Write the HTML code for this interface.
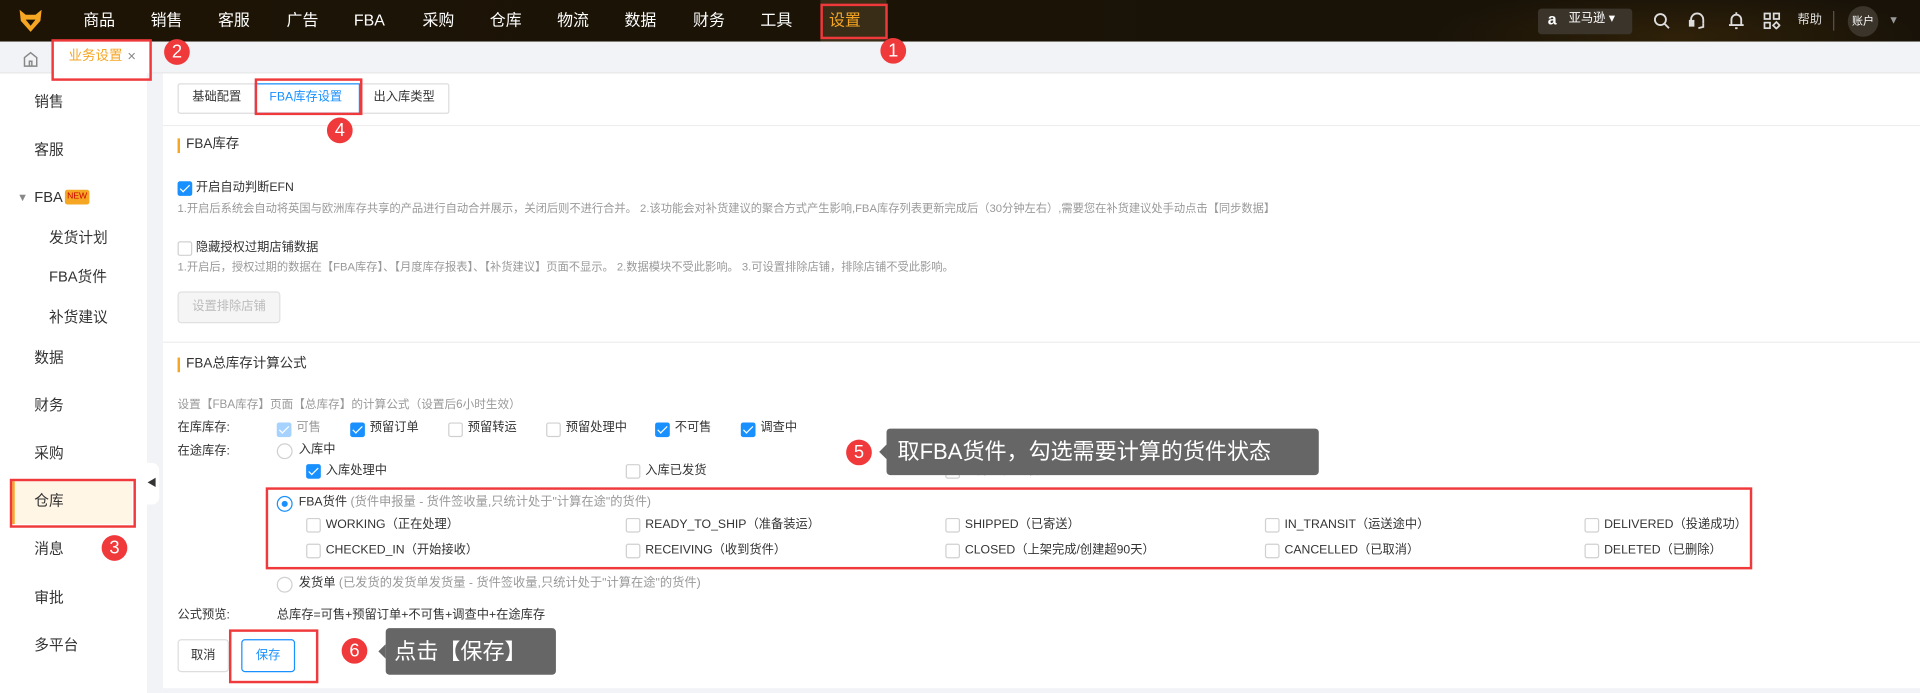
<!DOCTYPE html>
<html><head><meta charset="utf-8"><style>
*{box-sizing:border-box;margin:0;padding:0}
html,body{width:1920px;height:693px;overflow:hidden;background:#fff}
body{font-family:"Liberation Sans","Noto Sans CJK SC",sans-serif;color:#333;line-height:1.25}
#w{position:absolute;left:0;top:0;width:1568px;height:566px;transform:scale(1.22449);transform-origin:0 0;font-size:11px}
.a{position:absolute;white-space:nowrap}
.hdr{left:0;top:0;width:1568px;height:34px;background:radial-gradient(ellipse 200px 40px at 1370px 30px,#2f2109,transparent),linear-gradient(90deg,#1e1405 0%,#1a1306 40%,#181208 100%)}
.nav{top:9px;color:#fff;font-size:13px}
.rb{position:absolute;border:2px solid #f0393b;z-index:5}
.c{position:absolute;width:21px;height:21px;border-radius:50%;background:#f0393b;color:#fff;font-size:15px;text-align:center;line-height:21px;z-index:6}
.cb{position:absolute;width:12px;height:12px;border:1px solid #d0d0d0;border-radius:2px;background:#fff}
.cb.on{background:#1890ff;border-color:#1890ff}
.cb.on:after{content:"";position:absolute;left:3px;top:0px;width:3px;height:7px;border:solid #fff;border-width:0 1.5px 1.5px 0;transform:rotate(45deg)}
.rd{position:absolute;width:13px;height:13px;border:1px solid #d0d0d0;border-radius:50%;background:#fff}
.rd.on{border-color:#1890ff}
.rd.on:after{content:"";position:absolute;left:3px;top:3px;width:5px;height:5px;border-radius:50%;background:#1890ff}
.g{color:#999}
.side{left:28px;font-size:12px;color:#333}
.tip{position:absolute;background:#666;color:#fff;border-radius:3px;z-index:6}
.tip:before{content:"";position:absolute;left:-6px;top:50%;margin-top:-6px;border:6px solid transparent;border-left:0;border-right-color:#666}
</style></head><body><div id="w">
<div class="a hdr"></div>
<svg class="a" style="left:15px;top:7px" width="20" height="20" viewBox="0 0 20 20"><path d="M1 1 L6 5 L14 5 L19 1 L18 10 L10 19 L2 10Z" fill="#f5a623"/><path d="M6 9 L10 14 L14 9Z" fill="#1a1306"/></svg>
<div class="a" style="left:670px;top:0;width:54px;height:34px;background:#3a2d18"></div>
<div class="a nav" style="left:68px">商品</div><div class="a nav" style="left:123px">销售</div><div class="a nav" style="left:178px">客服</div><div class="a nav" style="left:234px">广告</div><div class="a nav" style="left:289px">FBA</div><div class="a nav" style="left:345px">采购</div><div class="a nav" style="left:400px">仓库</div><div class="a nav" style="left:455px">物流</div><div class="a nav" style="left:510px">数据</div><div class="a nav" style="left:566px">财务</div><div class="a nav" style="left:621px">工具</div><div class="a nav" style="left:677px;color:#f5a623">设置</div>
<div class="rb" style="left:670px;top:3px;width:55px;height:29px"></div>
<div class="c" style="left:719px;top:31px">1</div>
<div class="a" style="left:1256px;top:7px;width:77px;height:21px;background:#3b342b;border-radius:3px"></div>
<div class="a" style="left:1264px;top:8px;color:#fff;font-size:13px;font-weight:bold">a</div>
<div class="a" style="left:1281px;top:10px;color:#fff;font-size:10px">亚马逊 ▾</div>
<svg class="a" style="left:1350px;top:10px" width="14" height="14" viewBox="0 0 14 14" fill="none" stroke="#ddd" stroke-width="1.5"><circle cx="6" cy="6" r="4.5"/><path d="M9.5 9.5L13 13"/></svg>
<svg class="a" style="left:1379px;top:9px" width="14" height="16" viewBox="0 0 14 16" fill="none" stroke="#ddd" stroke-width="1.5"><path d="M2 9V7a5 5 0 0 1 10 0v3"/><rect x="1" y="8" width="3" height="4" fill="#ddd"/><path d="M12 10v3l-4 1"/></svg>
<svg class="a" style="left:1411px;top:9px" width="14" height="16" viewBox="0 0 14 16" fill="none" stroke="#ddd" stroke-width="1.5"><path d="M3 11V7a4 4 0 0 1 8 0v4M1 11.5h12M6 14h2M7 1v2"/></svg>
<svg class="a" style="left:1440px;top:10px" width="14" height="14" viewBox="0 0 14 14" fill="none" stroke="#ddd" stroke-width="1.4"><rect x="1" y="1" width="4.5" height="4.5"/><rect x="8.5" y="1" width="4.5" height="4.5"/><rect x="1" y="8.5" width="4.5" height="4.5"/><path d="M10.7 8l2.7 2.7-2.7 2.7-2.7-2.7z"/></svg>
<div class="a" style="left:1468px;top:11px;color:#ddd;font-size:10px">帮助</div>
<div class="a" style="left:1497px;top:9px;width:1px;height:16px;background:#555"></div>
<div class="a" style="left:1509px;top:5px;width:25px;height:25px;border-radius:50%;background:#3b342b;color:#fff;font-size:9px;text-align:center;line-height:25px">账户</div>
<div class="a" style="left:1542px;top:11px;color:#999;font-size:9px">▼</div>

<div class="a" style="left:0;top:34px;width:1568px;height:26px;background:#f2f3f6;border-bottom:1px solid #e8e8e8"></div>
<svg class="a" style="left:18px;top:41px" width="14" height="14" viewBox="0 0 14 14" fill="none" stroke="#888" stroke-width="1.2"><path d="M2 6L7 2l5 4v7H2z"/><path d="M6 13V9h2v4"/></svg>
<div class="a" style="left:43px;top:34px;width:79px;height:26px;background:#fff"></div>
<div class="a" style="left:56px;top:40px;color:#f5a623;font-size:11px">业务设置</div>
<div class="a" style="left:104px;top:39px;color:#888;font-size:12px">×</div>
<div class="rb" style="left:42px;top:32px;width:82px;height:34px"></div>
<div class="c" style="left:134px;top:32px">2</div>

<div class="a" style="left:120px;top:60px;width:13px;height:506px;background:#f2f3f6"></div>
<div class="a side" style="top:76px">销售</div>
<div class="a side" style="top:115px">客服</div>
<div class="a" style="left:14px;top:156px;color:#888;font-size:9px">▼</div>
<div class="a side" style="top:154px">FBA</div>
<div class="a" style="left:53px;top:155px;width:20px;height:12px;background:#f5a623;color:#c00;font-size:7px;text-align:center;line-height:12px;border-radius:2px">NEW</div>
<div class="a side" style="left:40px;top:187px">发货计划</div>
<div class="a side" style="left:40px;top:219px">FBA货件</div>
<div class="a side" style="left:40px;top:252px">补货建议</div>
<div class="a side" style="top:285px">数据</div>
<div class="a side" style="top:324px">财务</div>
<div class="a side" style="top:363px">采购</div>
<div class="a" style="left:10px;top:393px;width:98px;height:35px;background:#fff6e6;border-left:2px solid #f5a623"></div>
<div class="a side" style="top:402px">仓库</div>
<div class="rb" style="left:8px;top:391px;width:103px;height:40px"></div>
<div class="c" style="left:83px;top:437px">3</div>
<div class="a side" style="top:441px">消息</div>
<div class="a side" style="top:481px">审批</div>
<div class="a side" style="top:520px">多平台</div>
<div class="a" style="left:118px;top:378px;width:12px;height:34px;background:#fff;border-radius:0 6px 6px 0;color:#333;font-size:8px;line-height:34px;text-align:center">◀</div>

<div class="a" style="left:145px;top:68px;width:222px;height:25px;border:1px solid #ddd;border-radius:2px"></div>
<div class="a" style="left:157px;top:74px;font-size:10px">基础配置</div>
<div class="a" style="left:208px;top:68px;width:86px;height:25px;border:1px solid #1890ff"></div>
<div class="a" style="left:220px;top:74px;font-size:10px;color:#1890ff">FBA库存设置</div>
<div class="a" style="left:305px;top:74px;font-size:10px">出入库类型</div>
<div class="rb" style="left:208px;top:64px;width:88px;height:30px"></div>
<div class="c" style="left:267px;top:96px">4</div>
<div class="a" style="left:133px;top:102px;width:1435px;height:1px;background:#eee"></div>

<div class="a" style="left:145px;top:113px;width:2px;height:12px;background:#f5a623"></div>
<div class="a" style="left:152px;top:112px;font-size:11px">FBA库存</div>
<div class="cb on" style="left:145px;top:148px"></div>
<div class="a" style="left:160px;top:148px;font-size:10px">开启自动判断EFN</div>
<div class="a g" style="left:145px;top:165px;font-size:9.2px">1.开启后系统会自动将英国与欧洲库存共享的产品进行自动合并展示，关闭后则不进行合并。 2.该功能会对补货建议的聚合方式产生影响,FBA库存列表更新完成后（30分钟左右）,需要您在补货建议处手动点击【同步数据】</div>
<div class="cb" style="left:145px;top:197px"></div>
<div class="a" style="left:160px;top:197px;font-size:10px">隐藏授权过期店铺数据</div>
<div class="a g" style="left:145px;top:213px;font-size:9.2px">1.开启后，授权过期的数据在【FBA库存】、【月度库存报表】、【补货建议】页面不显示。 2.数据模块不受此影响。 3.可设置排除店铺，排除店铺不受此影响。</div>
<div class="a" style="left:145px;top:238px;width:84px;height:26px;background:#f5f5f5;border:1px solid #e0e0e0;border-radius:3px;color:#bbb;font-size:10px;text-align:center;line-height:24px">设置排除店铺</div>
<div class="a" style="left:133px;top:279px;width:1435px;height:1px;background:#eee"></div>

<div class="a" style="left:145px;top:292px;width:2px;height:12px;background:#f5a623"></div>
<div class="a" style="left:152px;top:291px;font-size:11px">FBA总库存计算公式</div>
<div class="a g" style="left:145px;top:325px;font-size:9.5px">设置【FBA库存】页面【总库存】的计算公式（设置后6小时生效）</div>
<div class="a" style="left:145px;top:344px;font-size:10px">在库库存:</div>
<div class="cb on" style="left:226px;top:345px;background:#a6d2ff;border-color:#a6d2ff"></div><div class="a g" style="left:242px;top:344px;font-size:10px">可售</div>
<div class="cb on" style="left:286px;top:345px"></div><div class="a" style="left:302px;top:344px;font-size:10px">预留订单</div>
<div class="cb" style="left:366px;top:345px"></div><div class="a" style="left:382px;top:344px;font-size:10px">预留转运</div>
<div class="cb" style="left:446px;top:345px"></div><div class="a" style="left:462px;top:344px;font-size:10px">预留处理中</div>
<div class="cb on" style="left:535px;top:345px"></div><div class="a" style="left:551px;top:344px;font-size:10px">不可售</div>
<div class="cb on" style="left:605px;top:345px"></div><div class="a" style="left:621px;top:344px;font-size:10px">调查中</div>
<div class="a" style="left:145px;top:363px;font-size:10px">在途库存:</div>
<div class="rd" style="left:226px;top:362px"></div><div class="a" style="left:244px;top:362px;font-size:10px">入库中</div>
<div class="cb on" style="left:250px;top:379px"></div><div class="a" style="left:266px;top:379px;font-size:10px">入库处理中</div>
<div class="cb" style="left:511px;top:379px"></div><div class="a" style="left:527px;top:379px;font-size:10px">入库已发货</div>
<div class="cb" style="left:772px;top:379px"></div><div class="a" style="left:788px;top:379px;font-size:10px">入库正在接收</div>

<div class="rd on" style="left:226px;top:405px"></div><div class="a" style="left:244px;top:405px;font-size:10px">FBA货件 <span class="g">(货件申报量 - 货件签收量,只统计处于"计算在途"的货件)</span></div>
<div class="cb" style="left:250px;top:423px"></div><div class="a" style="left:266px;top:423px;font-size:10px">WORKING（正在处理）</div>
<div class="cb" style="left:511px;top:423px"></div><div class="a" style="left:527px;top:423px;font-size:10px">READY_TO_SHIP（准备装运）</div>
<div class="cb" style="left:772px;top:423px"></div><div class="a" style="left:788px;top:423px;font-size:10px">SHIPPED（已寄送）</div>
<div class="cb" style="left:1033px;top:423px"></div><div class="a" style="left:1049px;top:423px;font-size:10px">IN_TRANSIT（运送途中）</div>
<div class="cb" style="left:1294px;top:423px"></div><div class="a" style="left:1310px;top:423px;font-size:10px">DELIVERED（投递成功）</div>
<div class="cb" style="left:250px;top:444px"></div><div class="a" style="left:266px;top:444px;font-size:10px">CHECKED_IN（开始接收）</div>
<div class="cb" style="left:511px;top:444px"></div><div class="a" style="left:527px;top:444px;font-size:10px">RECEIVING（收到货件）</div>
<div class="cb" style="left:772px;top:444px"></div><div class="a" style="left:788px;top:444px;font-size:10px">CLOSED（上架完成/创建超90天）</div>
<div class="cb" style="left:1033px;top:444px"></div><div class="a" style="left:1049px;top:444px;font-size:10px">CANCELLED（已取消）</div>
<div class="cb" style="left:1294px;top:444px"></div><div class="a" style="left:1310px;top:444px;font-size:10px">DELETED（已删除）</div>
<div class="rb" style="left:217px;top:398px;width:1214px;height:67px"></div>
<div class="rd" style="left:226px;top:471px"></div><div class="a" style="left:244px;top:471px;font-size:10px">发货单 <span class="g">(已发货的发货单发货量 - 货件签收量,只统计处于"计算在途"的货件)</span></div>
<div class="a" style="left:145px;top:497px;font-size:10px">公式预览:</div>
<div class="a" style="left:226px;top:497px;font-size:10px">总库存=可售+预留订单+不可售+调查中+在途库存</div>
<div class="a" style="left:145px;top:522px;width:42px;height:27px;border:1px solid #ddd;border-radius:3px;font-size:10px;text-align:center;line-height:25px">取消</div>
<div class="a" style="left:197px;top:522px;width:44px;height:27px;border:1px solid #1890ff;border-radius:3px;font-size:10px;color:#1890ff;text-align:center;line-height:25px">保存</div>
<div class="rb" style="left:187px;top:514px;width:73px;height:44px"></div>
<div class="c" style="left:279px;top:521px">6</div>
<div class="tip" style="left:315px;top:513px;width:139px;height:38px;font-size:18px;line-height:38px;padding-left:7px">点击【保存】</div>
<div class="c" style="left:691px;top:359px">5</div>
<div class="tip" style="left:724px;top:350px;width:353px;height:38px;font-size:18px;line-height:38px;padding-left:9px">取FBA货件，勾选需要计算的货件状态</div>
<div class="a" style="left:133px;top:562px;width:1435px;height:4px;background:#f2f3f6"></div>
</div></body></html>
